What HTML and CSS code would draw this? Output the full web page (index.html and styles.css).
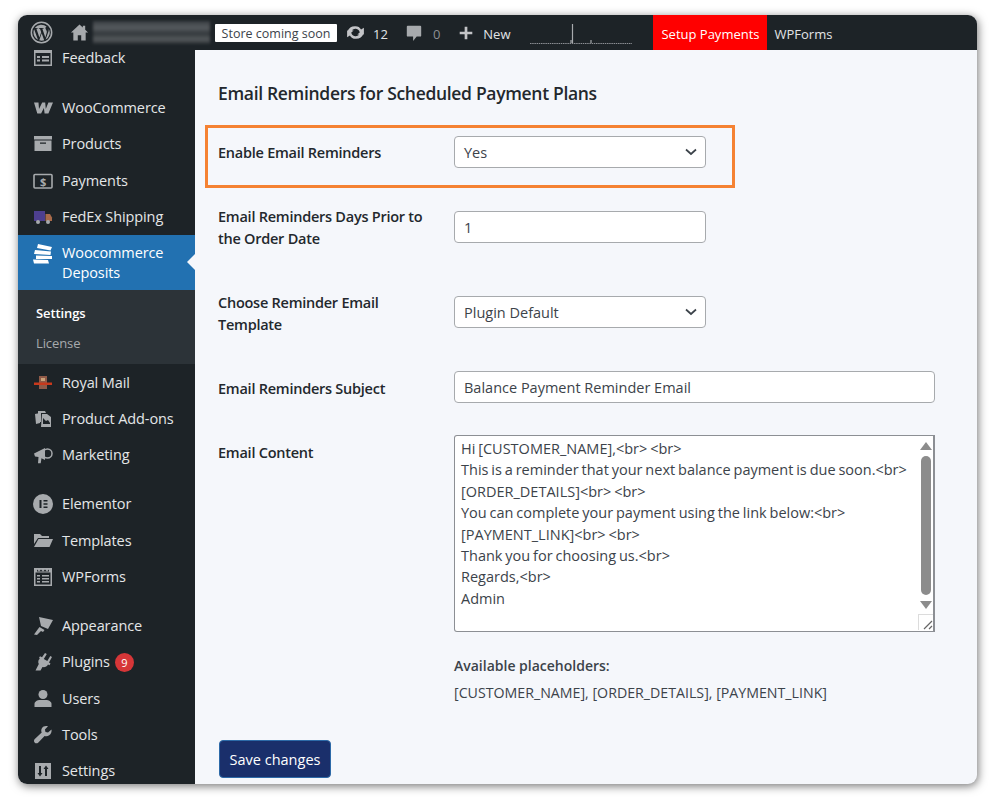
FILE: index.html
```html
<!DOCTYPE html>
<html lang="en">

<head>
    <meta charset="UTF-8">
    <meta name="viewport" content="width=device-width, initial-scale=1.0">
    <title>Email Reminders</title>
    <link rel="stylesheet" href="styles.css">
</head>

<body>
    <div class="window">

        <!-- Top admin bar -->
        <div class="adminbar">
            <svg class="bar-wp" viewBox="0 0 24 24"><circle cx="12" cy="12" r="10.6" fill="none" stroke="#a7aaad" stroke-width="1.6"/><path d="M3.6 12c0 3.3 1.9 6.2 4.7 7.500L4.300 8.600A8.400 8.400 0 0 0 3.600 12zm14-0.400c0-1-.4-1.800-.7-2.300-.4-.7-.8-1.200-.8-1.900 0-.7.600-1.400 1.300-1.400h.1A8.400 8.400 0 0 0 5 7.400h.5c.9 0 2.200-.1 2.200-.1.400 0 .5.600 0 .7 0 0-.5.100-1 .100l3.100 9.200 1.900-5.600-1.300-3.600c-.5 0-.9-.1-.9-.1-.5 0-.4-.7 0-.7 0 0 1.400.1 2.200.1.900 0 2.200-.1 2.200-.1.500 0 .5.600 0 .7 0 0-.5.100-1 .100l3.100 9.100.8-2.800c.4-1.100.7-1.900.7-2.600zM12.200 12.800l-2.500 7.400a8.400 8.400 0 0 0 5.200-.1l-.1-.1zm7.300-4.800c0 .3.100.6.100.9 0 .9-.2 1.900-.7 3.100l-2.600 7.400A8.400 8.400 0 0 0 19.500 8z" fill="#a7aaad"/></svg>
            <svg class="bar-home" viewBox="0 0 20 20"><path d="M10 1.500 1 10h2.500v8.500h4.700v-5.500h3.600v5.500h4.700V10H19l-3-2.900V3h-2.500v1.700z" fill="#a7aaad"/></svg>
            <div class="site-name"></div>
            <span class="store-badge">Store coming soon</span>
            <svg class="bar-updates" viewBox="0 0 20 20"><path d="M10 4a6 6 0 0 1 5.300 3.200L18 5.500V12h-6.300l2.300-1.900A4.200 4.200 0 0 0 6 9H2.300A7.800 7.800 0 0 1 10 4zM10 16a6 6 0 0 1-5.300-3.200L2 14.500V8h6.300L6 9.900A4.200 4.200 0 0 0 14 11h3.700A7.800 7.800 0 0 1 10 16z" fill="#c3c4c7"/></svg>
            <span class="bar-count">12</span>
            <svg class="bar-comment" viewBox="0 0 20 20"><path d="M3 2h14a1 1 0 0 1 1 1v10a1 1 0 0 1-1 1h-4l-4 5v-5H3a1 1 0 0 1-1-1V3a1 1 0 0 1 1-1z" fill="#a7aaad"/></svg>
            <span class="bar-zero">0</span>
            <svg class="bar-plus" viewBox="0 0 20 20"><path d="M8.500 3h3v5.500H17v3h-5.500V17h-3v-5.500H3v-3h5.500z" fill="#c3c4c7"/></svg>
            <span class="bar-new">New</span>
            <svg class="bar-spark" width="103" height="22" viewBox="0 0 103 22"><path d="M0 20.500h102" stroke="#8c8f94" stroke-width="1" stroke-dasharray="1.500 .7" fill="none"/><path d="M41 20V17M42.500 20V1M61 20v-3" stroke="#a7aaad" stroke-width="1.200" fill="none"/></svg>
            <span class="bar-setup">Setup Payments</span>
            <span class="bar-wpforms">WPForms</span>
        </div>

        <div class="layout">

            <!-- Sidebar -->
            <div class="sidebar">
                <div class="menu-item feedback">
                    <svg class="icon" viewBox="0 2 20 16"><path d="M1 2h18v16H1zm1.500 3v11.500h15V5zM4 8h3v2H4zm5 0h7v2H9zm-5 3.500h3v2H4zm5 0h7v2H9z" fill="#a7aaad" fill-rule="evenodd"/></svg>
                    <span>Feedback</span>
                </div>
                <div class="menu-item gap">
                    <svg class="icon" viewBox="0 0 20 20"><path d="M1 4.500h4.500l.5 6.500 3.200-6.500h3l.6 6.500 2.600-6.500H20l-4.600 11h-3.800l-.7-5.500-2.800 5.500H4.300z" fill="#a7aaad"/></svg>
                    <span>WooCommerce</span>
                </div>
                <div class="menu-item">
                    <svg class="icon" viewBox="0 0 20 20"><path d="M1 2h18v3.500H1zM1.500 6.500h17V17h-17zM7 8.500v1.300h6V8.500z" fill="#a7aaad" fill-rule="evenodd"/></svg>
                    <span>Products</span>
                </div>
                <div class="menu-item">
                    <svg class="icon" viewBox="0 0 20 20"><rect x="1" y="3.500" width="18" height="13.500" rx="1" fill="none" stroke="#a7aaad" stroke-width="1.600"/><text x="10" y="14.500" class="dollar">$</text></svg>
                    <span>Payments</span>
                </div>
                <div class="menu-item">
                    <svg class="icon" viewBox="0 0 20 20"><path d="M1 4h11v10H1z" fill="#4d3f8f"/><path d="M12.500 7H17l2 3.500V14h-6.500z" fill="#a86a4a"/><circle cx="5" cy="15" r="2" fill="#a7aaad"/><circle cx="15" cy="15" r="2" fill="#a7aaad"/></svg>
                    <span>FedEx Shipping</span>
                </div>
                <div class="menu-item active">
                    <svg class="icon" viewBox="0 0 20 20"><path d="M5 0l14 3-1.500 3.500L4 4zM2 6l16 1.500-.5 3.500L1 10zM3 11.500l16 .5v3H3zM0 15.500l15 .5 1 3.500H1z" fill="#fff"/></svg>
                    <span>Woocommerce Deposits</span>
                </div>
                <div class="submenu">
                    <div class="sub-current">Settings</div>
                    <div class="sub-item">License</div>
                </div>
                <div class="menu-item">
                    <svg class="icon" viewBox="0 0 20 20"><path d="M6 3h8v13H6z" fill="#8f5a48"/><path d="M1 9.500h18v2.500H1z" fill="#c8391c"/><path d="M8 5h4v3H8z" fill="#c9a27a"/></svg>
                    <span>Royal Mail</span>
                </div>
                <div class="menu-item">
                    <svg class="icon" viewBox="0 0 20 20"><path d="M2 5l5-1v10l-4 1zM5 2h7l1 2H8v9H5zM9 5h5l4 3v10H8z" fill="#a7aaad"/><path d="M10 9l3 3 2-1 2 3v1h-7z" fill="#1d2327"/></svg>
                    <span>Product Add-ons</span>
                </div>
                <div class="menu-item">
                    <svg class="icon" viewBox="0 0 20 20"><path d="M1 8.500 12 3v12L8.500 13.300l-.8 5H5l.5-6.300L2 11.500z" fill="#a7aaad"/><circle cx="14.500" cy="8.500" r="4.500" fill="none" stroke="#a7aaad" stroke-width="1.500"/></svg>
                    <span>Marketing</span>
                </div>
                <div class="menu-item gap">
                    <svg class="icon" viewBox="0 0 20 20"><path d="M10 0a10 10 0 1 1 0 20 10 10 0 0 1 0-20zM6.500 6v8h2V6zm4 0v1.600h4V6zm0 3.200v1.600h4V9.200zm0 3.200V14h4v-1.600z" fill="#a7aaad" fill-rule="evenodd"/></svg>
                    <span>Elementor</span>
                </div>
                <div class="menu-item">
                    <svg class="icon" viewBox="0 0 20 20"><path d="M1 3h6l2 2h7v2H5L1 13zM5.500 8H20l-3.500 8H1z" fill="#a7aaad"/></svg>
                    <span>Templates</span>
                </div>
                <div class="menu-item">
                    <svg class="icon" viewBox="0 0 20 20"><path d="M1 1h18v18H1zm1.500 4.500v12h15v-12zM4 8h3v1.500H4zm5 0h7v1.500H9zm-5 3h3v1.500H4zm5 0h7v1.500H9zm-5 3h3v1.500H4zm5 0h7v1.500H9zM4 2.500l2 2 2-2 2 2 2-2 2 2 2-2v2H4z" fill="#a7aaad" fill-rule="evenodd"/></svg>
                    <span>WPForms</span>
                </div>
                <div class="menu-item gap">
                    <svg class="icon" viewBox="0 0 20 20"><path d="M6 1l14 3-5 9-7-3zM6.500 11l5 3-1.500 2-2-1-4 4-3-.5 4-5.500z" fill="#a7aaad"/></svg>
                    <span>Appearance</span>
                </div>
                <div class="menu-item">
                    <svg class="icon" viewBox="0 0 20 20"><path d="M12 1l1.800 1-3 5 3.500 2 3-5 1.700 1-3 5.500 1.500 1-1 1.700-1.500-.7c-1.200 2-3 3.100-5.500 2.600L7.500 18.500H2.500l3.300-6.500C4.600 10 5.500 7.500 7 6.800l-1-.8 1-1.700 2 1z" fill="#a7aaad"/></svg>
                    <span>Plugins</span>
                    <b class="badge">9</b>
                </div>
                <div class="menu-item">
                    <svg class="icon" viewBox="0 0 20 20"><circle cx="10" cy="5.500" r="4.500" fill="#a7aaad"/><path d="M1.500 18v-3c0-2.500 3-4 5.500-4h6c2.500 0 5.500 1.500 5.500 4v3z" fill="#a7aaad"/></svg>
                    <span>Users</span>
                </div>
                <div class="menu-item">
                    <svg class="icon" viewBox="0 0 20 20"><path d="M18.500 4.500l-3.500 3-2.500-.6-.6-2.400 3.100-3.200c-2.500-.8-5 0-6.100 2-.8 1.400-.8 3-.2 4.200L1.800 14c-1 1-1 2.500-.2 3.500s2.500 1.200 3.500.2l6.500-6.800c1.400.6 3.200.4 4.600-.6 1.800-1.300 2.800-3.700 2.300-5.800z" fill="#a7aaad"/></svg>
                    <span>Tools</span>
                </div>
                <div class="menu-item last">
                    <svg class="icon" viewBox="0 0 20 20"><path d="M2 2h16v16H2zM6 5v7H4.500L7 15.500 9.500 12H8V5zm6 10h2V8h1.500L13 4.500 10.500 8H12z" fill="#a7aaad" fill-rule="evenodd"/></svg>
                    <span>Settings</span>
                </div>
            </div>

            <!-- Main settings form -->
            <div class="content">
                <h2>Email Reminders for Scheduled Payment Plans</h2>

                <div class="form-row highlight">
                    <label>Enable Email Reminders</label>
                    <div class="select-box"><span>Yes</span><svg class="chevron" viewBox="0 0 12 8"><path d="M1 1.500l5 4.500 5-4.500" fill="none" stroke="#3c434a" stroke-width="1.700"/></svg></div>
                </div>

                <div class="form-row days">
                    <label>Email Reminders Days Prior to the Order Date</label>
                    <input class="input-short" type="text" value="1">
                </div>

                <div class="form-row template">
                    <label>Choose Reminder Email Template</label>
                    <div class="select-box"><span>Plugin Default</span><svg class="chevron" viewBox="0 0 12 8"><path d="M1 1.500l5 4.500 5-4.500" fill="none" stroke="#3c434a" stroke-width="1.700"/></svg></div>
                </div>

                <div class="form-row subject">
                    <label>Email Reminders Subject</label>
                    <input class="input-long" type="text" value="Balance Payment Reminder Email">
                </div>

                <div class="form-row email">
                    <label>Email Content</label>
                    <div>
                        <div class="textarea-box">
                            <textarea spellcheck="false">Hi [CUSTOMER_NAME],&lt;br&gt; &lt;br&gt;
This is a reminder that your next balance payment is due soon.&lt;br&gt;
[ORDER_DETAILS]&lt;br&gt; &lt;br&gt;
You can complete your payment using the link below:&lt;br&gt;
[PAYMENT_LINK]&lt;br&gt; &lt;br&gt;
Thank you for choosing us.&lt;br&gt;
Regards,&lt;br&gt;
Admin</textarea>
                            <div class="scroll-col">
                                <i class="arrow-up"></i>
                                <i class="thumb"></i>
                                <i class="arrow-down"></i>
                                <div class="grip"><svg viewBox="0 0 14 14" width="14" height="14"><path d="M5 13l8-8M10 13l3-3" stroke="#666" stroke-width="1.200" fill="none"/></svg></div>
                            </div>
                        </div>
                        <p class="hint-title">Available placeholders:</p>
                        <p class="hint">[CUSTOMER_NAME], [ORDER_DETAILS], [PAYMENT_LINK]</p>
                    </div>
                </div>

                <button>Save changes</button>
            </div>
        </div>
    </div>
</body>

</html>
```

FILE: styles.css
```css
html,
body {
    height: 100%;
}

body {
    margin: 0;
    padding: 15px 17px 16px 18px;
    box-sizing: border-box;
    background-color: #ffffff;
    font-family: "Open Sans", "Noto Sans", sans-serif;
    overflow: hidden;
}

.window {
    height: 769px;
    display: flex;
    flex-direction: column;
    border-radius: 9px;
    overflow: hidden;
    background-color: #f5f7fb;
    box-shadow: 1px 2px 10px rgba(0, 0, 0, 0.55);
}

/* admin bar */
.adminbar {
    position: relative;
    z-index: 2;
    flex: 0 0 35px;
    display: flex;
    align-items: center;
    background-color: #1d2327;
    color: #e2e4e6;
    font-size: 13px;
}

.bar-wp {
    width: 23px;
    height: 23px;
    margin-left: 12px;
}

.bar-home {
    width: 19px;
    height: 19px;
    margin-left: 17px;
}

.site-name {
    width: 117px;
    height: 23px;
    margin-left: 4px;
    background: linear-gradient(#3a3f43, #565a5e 30%, #33383c 55%, #55595c 80%, #2a2f33);
    filter: blur(1.5px);
}

.store-badge {
    width: 122px;
    height: 18px;
    margin-left: 5px;
    background-color: #ffffff;
    color: #3c434a;
    font-size: 12.500px;
    line-height: 20px;
    text-align: center;
    border-radius: 1px;
}

.bar-updates {
    width: 21px;
    height: 21px;
    margin-left: 8px;
}

.bar-count {
    margin: 2px 0 0 7px;
}

.bar-comment {
    width: 18px;
    height: 18px;
    margin-left: 17px;
}

.bar-zero {
    margin: 2px 0 0 10px;
    color: #8c8f94;
}

.bar-plus {
    width: 18px;
    height: 18px;
    margin-left: 17px;
}

.bar-new {
    margin: 2px 0 0 8px;
}

.bar-spark {
    margin-left: 20px;
    margin-top: 3px;
}

.bar-setup {
    width: 114px;
    height: 35px;
    box-sizing: border-box;
    margin-left: 20px;
    padding-top: 2px;
    background-color: #ff0000;
    color: #ffffff;
    line-height: 35px;
    text-align: center;
}

.bar-wpforms {
    margin: 2px 0 0 7px;
}

.layout {
    flex: 1;
    display: flex;
    min-height: 0;
}

/* sidebar */
.sidebar {
    flex: 0 0 177px;
    background-color: #1d2327;
    color: #e4e6e8;
    font-size: 14.500px;
    letter-spacing: -0.1px;
    overflow: hidden;
}

.menu-item {
    position: relative;
    height: 36.400px;
    display: flex;
    align-items: center;
}

.menu-item span {
    line-height: 20px;
}

.menu-item .icon {
    flex: 0 0 20px;
    height: 20px;
    margin: 0 9px 0 15px;
}

/* the list is scrolled, only the lower part of this row shows */
.feedback {
    height: 27.400px;
    align-items: flex-start;
}

.feedback span {
    line-height: 16px;
}

.menu-item.feedback .icon {
    height: 16px;
}

.gap {
    margin-top: 12.500px;
}

.last {
    height: 30px;
    align-items: flex-start;
    padding-top: 8px;
    box-sizing: border-box;
}

.dollar {
    font-size: 11px;
    font-weight: 700;
    fill: #a7aaad;
    text-anchor: middle;
}

.active {
    height: 55px;
    background-color: #2271b1;
    color: #ffffff;
}

.active span {
    width: 110px;
}

.menu-item.active .icon {
    align-self: flex-start;
    margin-top: 9px;
}

.active::after {
    content: "";
    position: absolute;
    right: 0;
    top: 19px;
    border: 8px solid transparent;
    border-right-color: #f5f7fb;
    border-left: 0;
}

.submenu {
    height: 74px;
    padding-top: 8px;
    box-sizing: border-box;
    background-color: #2c3338;
    font-size: 13px;
}

.sub-current,
.sub-item {
    height: 30px;
    line-height: 30px;
    padding-left: 18px;
}

.sub-current {
    color: #ffffff;
    font-weight: 600;
}

.sub-item {
    color: #a7aaad;
}

.badge {
    width: 19px;
    height: 19px;
    margin-left: 5px;
    border-radius: 50%;
    background-color: #d63638;
    color: #ffffff;
    font-size: 11px;
    font-weight: 400;
    line-height: 19px;
    text-align: center;
}

/* form */
.content {
    flex: 1;
    padding: 0 42px 0 23px;
    color: #1d2327;
    font-size: 14.500px;
}

h2 {
    margin: 30px 0 0;
    font-size: 17.500px;
    font-weight: 600;
    letter-spacing: -0.32px;
    line-height: 27px;
    color: #23282d;
}

.form-row {
    display: grid;
    grid-template-columns: 236px 1fr;
}

.form-row label {
    font-weight: 600;
    letter-spacing: -0.25px;
    line-height: 22px;
    padding-right: 10px;
    color: #23282d;
}

.highlight {
    width: 530px;
    box-sizing: border-box;
    margin: 18px 0 0 -13px;
    padding: 8px 0 0 10px;
    height: 63px;
    border: 3px solid #f58233;
}

.highlight label {
    padding-top: 6px;
}

.select-box {
    width: 252px;
    height: 32px;
    box-sizing: border-box;
    display: flex;
    align-items: center;
    justify-content: space-between;
    padding: 0 8px 0 9px;
    background-color: #ffffff;
    border: 1px solid #a7aaad;
    border-radius: 4px;
    color: #3c434a;
}

.chevron {
    width: 12px;
    height: 8px;
}

input {
    box-sizing: border-box;
    height: 32px;
    padding: 0 9px;
    background-color: #ffffff;
    border: 1px solid #a7aaad;
    border-radius: 4px;
    color: #3c434a;
    font-family: inherit;
    font-size: 14.500px;
}

.input-short {
    width: 252px;
}

.input-long {
    width: 481px;
}

.days {
    margin-top: 23px;
    height: 61px;
}

.days label {
    margin-top: -5px;
}

.template {
    margin-top: 24px;
    height: 51px;
}

.template label {
    margin-top: -4px;
}

.subject {
    margin-top: 24px;
    height: 32px;
    align-items: center;
}

.subject label {
    padding-top: 3px;
}

.email {
    margin-top: 32px;
}

.email label {
    padding-top: 7px;
}

.textarea-box {
    width: 481px;
    height: 197px;
    box-sizing: border-box;
    display: flex;
    background-color: #ffffff;
    border: 1px solid #8c8f94;
    border-right: 2px solid #8c8f94;
    border-radius: 3px 0 0 3px;
}

textarea {
    flex: 1;
    padding: 2px 0 0 6px;
    border: 0;
    outline: 0;
    resize: none;
    overflow: hidden;
    background: transparent;
    color: #3c434a;
    font-family: inherit;
    font-size: 14.500px;
    word-spacing: -0.9px;
    line-height: 21.400px;
    white-space: pre;
}

.scroll-col {
    flex: 0 0 15px;
    display: flex;
    flex-direction: column;
    align-items: center;
    padding-top: 6px;
    box-sizing: border-box;
}

.arrow-up,
.arrow-down {
    width: 0;
    height: 0;
    border-left: 6px solid transparent;
    border-right: 6px solid transparent;
}

.arrow-up {
    border-bottom: 8px solid #8c8c8c;
}

.arrow-down {
    margin-top: 6px;
    border-top: 8px solid #8c8c8c;
}

.thumb {
    width: 10px;
    height: 139px;
    margin-top: 6px;
    border-radius: 5px;
    background-color: #8c8c8c;
}

.grip {
    width: 15px;
    height: 16px;
    margin-top: 5px;
    border: 1px solid #dcdcdc;
    border-width: 1px 0 0 1px;
    box-sizing: border-box;
}

.hint-title {
    margin: 23px 0 0;
    font-weight: 600;
    font-size: 14px;
    line-height: 22px;
    color: #3c434a;
}

.hint {
    margin: 5px 0 0;
    font-size: 14.200px;
    line-height: 22px;
    color: #3c434a;
}

button {
    display: block;
    width: 112px;
    height: 38px;
    margin: 36px 0 0 1px;
    background-color: #1a2f6b;
    border: 1px solid #2d6aa8;
    border-radius: 4px;
    color: #ffffff;
    font-family: inherit;
    font-size: 14.500px;
    cursor: pointer;
}
```
